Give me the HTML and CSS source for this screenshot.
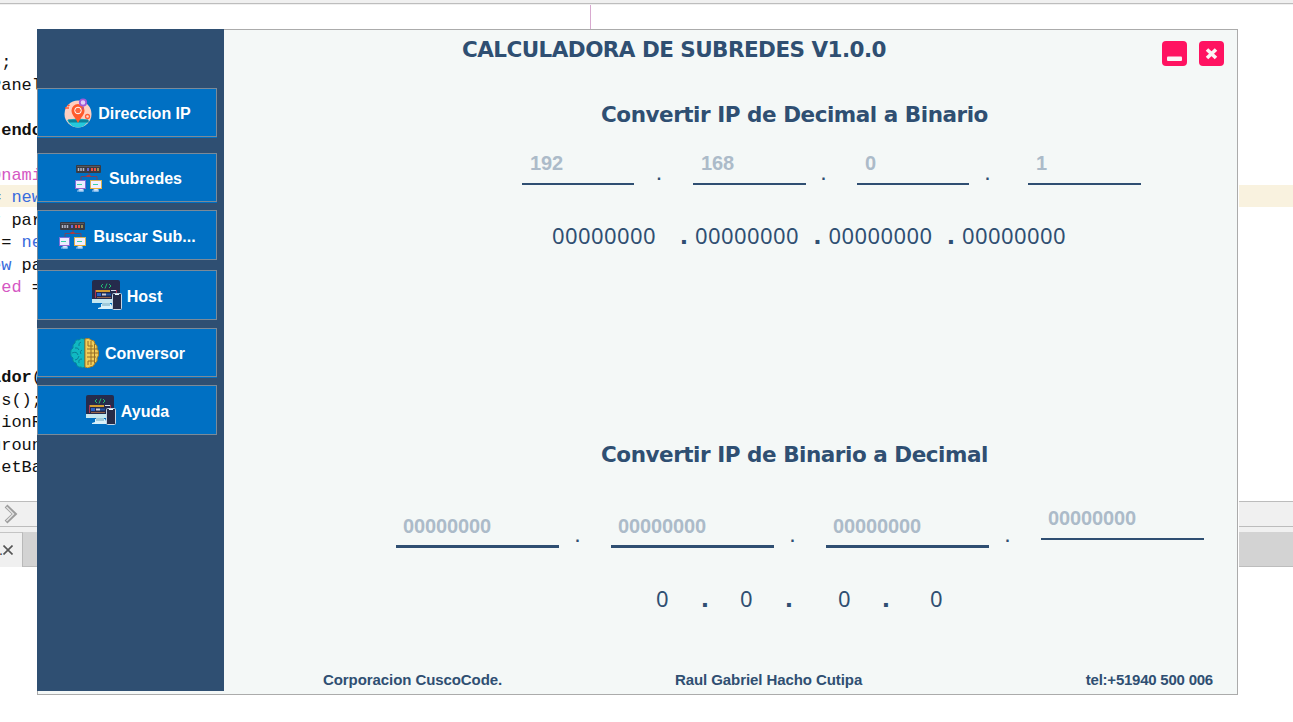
FILE: index.html
```html
<!DOCTYPE html>
<html lang="es">
<head>
<meta charset="utf-8">
<title>Calculadora de Subredes</title>
<link rel="stylesheet" href="styles.css">
</head>
<body>
<svg width="0" height="0" class="defs">
  <symbol id="net" viewBox="0 0 30 30">
    <path d="M7 17v-3.500h16v3.500M15 9v4" fill="none" stroke="#75445f"/>
    <rect x="2" y="2" width="25" height="8" rx="1" fill="#393b43"/>
    <path d="M3 3.500h23" stroke="#555861"/>
    <path d="M4.500 5v3M7 5v3M9.500 5v3" stroke="#b6b8c8" stroke-width="1.500"/>
    <path d="M14 5v3" stroke="#6669db" stroke-width="2"/><path d="M18 5v3M21 5v3" stroke="#eb5145" stroke-width="2"/><path d="M24 5v3" stroke="#ffe06a"/>
    <rect x="12.500" y="12" width="4" height="2" fill="#a43e48"/>
    <path d="M5 24h4v4h-4zM20 24h4v4h-4zM3 28h7M18 28h7" fill="#ddecff" stroke="#acd1f5"/>
    <rect x="1.500" y="17.500" width="10" height="8" fill="#ecebff" stroke="#7970d7"/>
    <rect x="16.500" y="17.500" width="11" height="8" fill="#f2efff" stroke="#d9b356"/>
    <path d="M1 25.500h11" stroke="#9566ce"/><path d="M16 25.500h12" stroke="#edad35"/>
    <path d="M3 21.500h5M19 21.500h5" stroke="#3bd1a5"/>
  </symbol>
  <symbol id="pc" viewBox="0 0 30 30">
    <path d="M9 24h10l2 4v1H6v-1l3-1z" fill="#d9f1fa"/><path d="M10 23h8v3h-8z" fill="#a0c9d9"/>
    <path d="M0 19h28v4H0z" fill="#c5e7f0"/>
    <path d="M0 2q0-2 2-2h24q2 0 2 2v17H0z" fill="#252b4c"/>
    <path d="M11 4l-2 2 2 2M17 4l2 2-2 2M15 3.500l-2 5" fill="none" stroke="#22bd73"/>
    <path d="M4 11h14" stroke="#d19b30" stroke-width="2"/><path d="M19 10.500h5" stroke="#d7dce9"/>
    <path d="M3.500 10v8M24.500 10v3" stroke="#a93553"/>
    <path d="M5 14.500h4" stroke="#2862c7" stroke-width="3"/><path d="M10 14.500h4" stroke="#c9cedc" stroke-width="2"/><path d="M14 14.500h5" stroke="#1f55a8" stroke-width="2"/>
    <path d="M5 17.500h14" stroke="#94634c"/>
    <rect x="20.500" y="13.500" width="9" height="16" rx="1" fill="#272b47" stroke="#c3d4e4"/>
    <path d="M23 14.500h4" stroke="#eff"/>
  </symbol>
</svg>

<div class="ide">
  <div class="ide-top"></div>
  <div class="code">
    <div>);</div>
    <div>Panel</div>
    <div></div>
    <div class="b">tendo</div>
    <div></div>
    <div><i class="id">Dnami</i></div>
    <div class="current">= <i class="kw">new</i></div>
    <div>r par</div>
    <div>&nbsp;= <i class="kw">ne</i></div>
    <div><i class="kw">ew</i> pa</div>
    <div><i class="id">red</i> =</div>
    <div></div><div></div><div></div>
    <div><b>ador</b>(</div>
    <div>ts();</div>
    <div>tionR</div>
    <div>groun</div>
    <div>setBa</div>
  </div>
  <div class="hscroll">
    <svg width="20" height="24" viewBox="0 0 20 24"><path d="M6 4l8.500 8-8.500 8" fill="none" stroke="#9c9c9c" stroke-width="4"/><path d="M6.500 5l7 7-7 7" fill="none" stroke="#e2e2e2" stroke-width="1.500"/></svg>
  </div>
  <div class="tabs"><div class="tab"><span>.</span><svg width="10" height="10" viewBox="0 0 10 10"><path d="M.5.5l9 9M9.500.5l-9 9" stroke="#555" stroke-width="1.600"/></svg></div></div>
</div>
<div class="margin-line"></div>

<div class="window">
  <nav class="side">
    <button class="btn lip">
      <svg width="30" height="30" viewBox="0 0 30 30"><circle cx="15" cy="16" r="13.500" fill="#ffcfc1"/><path d="M4 22q11-3 22 0q-4 7.500-11 7.500T4 22z" fill="#24c9dc"/><path d="M5 21.500h20l1 3H6z" fill="#0b829b"/><path d="M15 25C12 19 8.500 17 8.500 12.500a6.500 6.500 0 0 1 13 0C21.500 17 18 19 15 25z" fill="#ff5a2b"/><circle cx="15" cy="12.500" r="3.300" fill="#fb6740" stroke="#fff"/><path d="M20.500 8.500l-1 3" stroke="#8d48c0"/><circle cx="20" cy="4.500" r="3.200" fill="#e5cef8" stroke="#a05ad8" stroke-width="1.800"/><circle cx="24.500" cy="18.500" r="2" fill="#ffd8cd" stroke="#ff6035" stroke-width="1.300"/><path d="M2 10h4M4.500 8l2-1" stroke="#ff5931" stroke-width="1.500"/></svg>
      <span>Direccion IP</span></button>
    <button class="btn lip"><svg width="30" height="30"><use href="#net"/></svg><span>Subredes</span></button>
    <button class="btn tall"><svg width="30" height="30"><use href="#net"/></svg><span>Buscar Sub...</span></button>
    <button class="btn tall"><svg width="30" height="30"><use href="#pc"/></svg><span>Host</span></button>
    <button class="btn lip">
      <svg width="30" height="30" viewBox="0 0 30 30"><path d="M14.500 1Q11-1 9 2 5 1 5 5 2 6 3 10 0 11 .8 15 0 19 3 20q-1 4 3 5 1 5 5 4 2 2 3.500 0z" fill="#10b8c2" stroke="#07849b"/><path d="M11 4q-3 1-2 4M5 10q3-1 4 2M2 15q5-2 6 2M5 22q3 0 4-4M12 12q-3 1-1 4M12 21q-4 0-3 4" fill="none" stroke="#087f97"/><path d="M15 1q4-2 6 1 4 0 4 4 3 1 2 5 2 2 1.500 4 .5 3-1.500 5 1 4-2 5-1 4-5 4-2 2-5 0z" fill="#f1cd59" stroke="#a77e29"/><path d="M18 3v5h5M17 11h10M17 15h12M17 19h9M18 27v-4h6M21 3v24M24.500 6v19" fill="none" stroke="#966e28"/></svg>
      <span>Conversor</span></button>
    <button class="btn tall"><svg width="30" height="30"><use href="#pc"/></svg><span>Ayuda</span></button>
  </nav>

  <main class="panel">
    <header class="head">
      <h1>CALCULADORA DE SUBREDES V1.0.0</h1>
      <div class="controls">
        <button class="ctl" aria-label="Minimizar"><svg width="25" height="25" viewBox="0 0 25 25"><rect x="5" y="15.500" width="15" height="4.500" rx="1" fill="#fbf5f6"/></svg></button>
        <button class="ctl" aria-label="Cerrar"><svg width="25" height="25" viewBox="0 0 25 25"><path d="M8 8.500l9 8.500M17 8.500l-9 8.500" stroke="#fbf5f6" stroke-width="3.600"/></svg></button>
      </div>
    </header>

    <h2 class="h-dec">Convertir IP de Decimal a Binario</h2>
    <div class="fields dec">
      <input class="field" placeholder="192"><span class="dot">.</span>
      <input class="field wide" placeholder="168"><span class="dot">.</span>
      <input class="field" placeholder="0"><span class="dot">.</span>
      <input class="field wide" placeholder="1">
    </div>
    <div class="result bin">
      <span>00000000</span><b>.</b><span>00000000</span><b>.</b><span>00000000</span><b>.</b><span>00000000</span>
    </div>

    <h2 class="h-bin">Convertir IP de Binario a Decimal</h2>
    <div class="fields octets">
      <input class="field" placeholder="00000000"><span class="dot">.</span>
      <input class="field" placeholder="00000000"><span class="dot">.</span>
      <input class="field" placeholder="00000000"><span class="dot">.</span>
      <input class="field thin" placeholder="00000000">
    </div>
    <div class="result decimal">
      <span>0</span><b>.</b><span>0</span><b>.</b><span>0</span><b>.</b><span>0</span>
    </div>

    <footer class="foot">
      <span>Corporacion CuscoCode.</span><span>Raul Gabriel Hacho Cutipa</span><span class="tel">tel:+51940 500 006</span>
    </footer>
  </main>
</div>
</body>
</html>
```
FILE: styles.css
```css
* { box-sizing: border-box; }
body { margin: 0; width: 1293px; height: 722px; overflow: hidden; background: #fff; position: relative; }
.defs { position: absolute; }
button { font: inherit; padding: 0; }

/* Editor behind the window */
.ide-top { height: 5px; background: #f0f0f0; box-shadow: inset 0 -1px #f0f0f0, inset 0 -2px #bdbdbd; }
.code {
  display: flex; flex-direction: column;
  padding-top: 45px; height: 496px;
  font: 17px/26px "Liberation Mono", monospace; color: #111;
}
.code div { height: 22.5px; flex: none; text-indent: -9px; white-space: pre; }
.code i { font-style: normal; }
.code .b { font-weight: bold; }
.code .current { background: #f9f2df; height: 22px; margin-bottom: 0.5px; }
.kw { color: #3a6cdd; }
.id { color: #d557c3; }
.hscroll { height: 26px; background: #f0f0f0; border: solid #bcbcbc; border-width: 1px 0; }
.hscroll svg { display: block; }
.tabs { border-top: 5px solid #f0f0f0; height: 40px; background: #d3d3d3; box-shadow: inset 0 -1px #bdbdbd; }
.tab {
  width: 23px; height: 35px; background: #f0f0f0; border-right: 1px solid #b9b9b9; border-top: 1px solid #c4c4c4;
  display: flex; align-items: center; font: 14px "Liberation Sans", sans-serif; color: #333;
}
.tab span { width: 3px; text-indent: -1px; }
.margin-line { position: absolute; left: 590px; top: 5px; width: 1px; height: 24px; background: #d8a9cf; }

/* Floating application window */
.window {
  position: absolute; left: 37px; top: 29px; width: 1201px; height: 666px;
  display: flex; background: #f4f8f7; border: 1px solid #ababab;
  box-shadow: 1px 0 #fff;
}
.side { width: 187px; height: 662px; margin: -1px 0 0 -1px; padding-top: 59px; background: #2f4f72; flex: none; }
.btn {
  display: flex; align-items: center; justify-content: center; gap: 5px;
  width: 180px; height: 49px; border: 1px solid #7a8a99; background: #0070c3; color: #fff;
  font: bold 16px "Liberation Sans", Arial, sans-serif; white-space: nowrap;
}
.btn span { padding-top: 2px; }
.lip { box-shadow: 0 1px #0070c3; }
.tall { height: 50px; }
.tall span { padding-top: 3px; }
.btn:nth-child(2) { margin-top: 16px; padding-left: 2px; }
.btn:nth-child(3), .btn:nth-child(5), .btn:nth-child(6) { margin-top: 8px; }
.btn:nth-child(5), .btn:nth-child(6) { padding-left: 1px; }
.btn:nth-child(4) { margin-top: 10px; }

.panel { width: 1013px; color: #2f4f72; display: flex; flex-direction: column; }
h1, h2 { margin: 0; font: bold 21.5px/28px "DejaVu Sans", Verdana, sans-serif; white-space: nowrap; }
h1 { margin-left: 238px; letter-spacing: -0.550px; }
h2 { margin-left: 377px; letter-spacing: -0.460px; flex: none; }
.head { display: flex; justify-content: space-between; height: 71px; padding: 6px 13px 0 0; }
.controls { display: flex; gap: 12px; padding-top: 5px; }
.ctl { width: 25px; height: 25px; border: 0; border-radius: 4px; background: #ff1361; }
.ctl svg { display: block; }

.fields { display: flex; flex: none; }
.field {
  width: 112px; height: 35px; padding: 0 0 6px 8px; border: 0; border-bottom: 2px solid #2f4f72;
  background: none; outline: 0; border-radius: 0;
  font: bold 20px "Liberation Sans", Arial, sans-serif; letter-spacing: -0.12px;
}
.wide { width: 113px; }
.field::placeholder { color: #acbbc9; opacity: 1; }
.dot { font: bold 16px/20px "Liberation Sans", sans-serif; padding-top: 15px; text-align: center; }
.dec { margin: 21px 0 0 298px; }
.dec .dot { width: 59px; padding-right: 9px; }
.dec .dot:nth-child(4) { width: 51px; padding-right: 16px; }
.dec .dot:nth-child(6) { padding-right: 22px; }

.result { display: flex; flex: none; align-items: baseline; font: 22px/30px "Noto Sans", Tahoma, sans-serif; letter-spacing: 0.420px; }
.result b { font: bold 22px/26px "DejaVu Sans", Verdana, sans-serif; letter-spacing: 0; }
.bin { margin: 35px 0 0 328px; height: 30px; }
.bin span { width: 105px; }
.bin b { width: 30px; padding-right: 7px; text-align: right; }
.bin b + span { width: 103.500px; }
.bin b:nth-child(2) { width: 38px; }

.h-bin { margin-top: 191px; }
.octets { margin: 37px 0 0 172px; }
.octets .field { width: 163px; height: 42px; border-bottom-width: 3px; padding: 1px 0 0 7px; }
.octets .thin { height: 34px; border-bottom-width: 2px; padding: 0 0 7px 7px; }
.octets .dot { width: 52px; padding: 21px 15px 0 0; }
.decimal { margin: 35px 0 0 432px; height: 30px; }
.decimal span { width: 14px; }
.decimal b { width: 70px; text-align: center; }
.decimal b:nth-child(4) { width: 84px; padding-right: 14px; }
.decimal b:nth-child(6) { width: 78px; padding-right: 10px; }

.foot {
  display: grid; grid-template-columns: 352px 1fr auto; margin: auto 24px 4px 99px;
  font: bold 15px/20px "Liberation Sans", Arial, sans-serif; letter-spacing: -0.080px;
}
.tel { letter-spacing: -0.230px; }
```
